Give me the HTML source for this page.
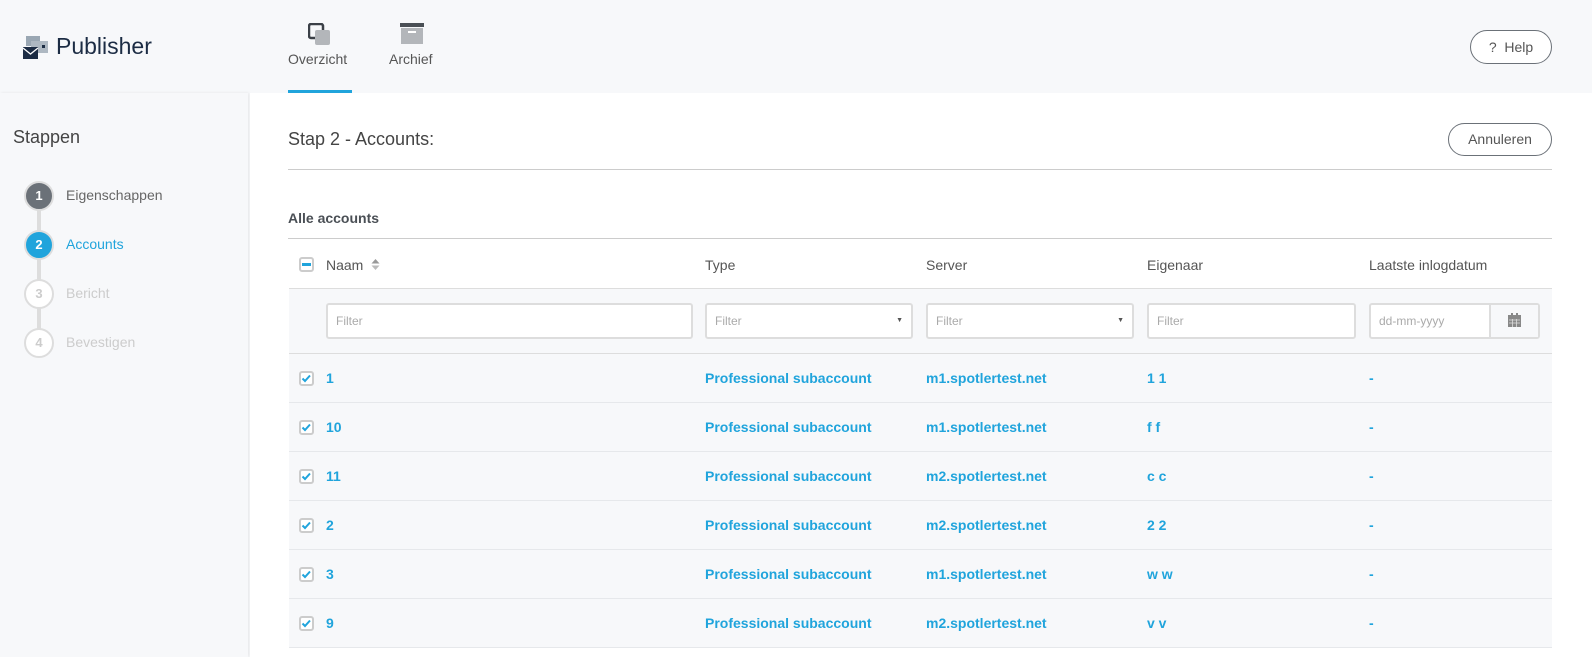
<!DOCTYPE html><html><head><style>
*{box-sizing:border-box;margin:0;padding:0}
body{width:1592px;height:657px;overflow:hidden;background:#f7f8fa;font-family:"Liberation Sans",sans-serif;position:relative;color:#4a4f55}
.a{position:absolute}
.top{left:0;top:0;width:1592px;height:93px;background:#f7f8fa}
.side{left:0;top:93px;width:248px;height:564px;background:#f7f8fa;box-shadow:1px 0 3px rgba(0,0,0,.08)}
.main{left:250px;top:93px;width:1342px;height:564px;background:#fff}
.circ{width:30px;height:30px;border-radius:50%;border:2px solid #ddd;background:#fff;color:#ccc;font-size:13px;font-weight:bold;text-align:center;line-height:26px}
.btn{border:1px solid #6b7178;border-radius:17px;background:#fff;font-size:14px;color:#555;text-align:center}
.inp{top:303px;height:36px;border:2px solid #ddd;border-radius:3px;background:#fff;font-size:12px;color:#aaa;padding:9px 8px}
.cb{width:15px;height:15px;border:2px solid #ccc;border-radius:3px;background:#fff}
.row{left:289px;width:1263px;height:49px;background:#f7f8fa;border-bottom:1px solid #e6e8eb}
.t{font-size:14px;font-weight:bold;color:#20a4dc}
.h{font-size:14px;color:#555;top:257px}
</style></head><body>
<div class="a top"></div>
<svg class="a" style="left:22px;top:36px" width="28" height="24"><rect x="4" y="0" width="14" height="10" fill="#9aa7b3"/><rect x="9" y="5" width="17" height="12" fill="#aeb8c2"/><rect x="20" y="9" width="3" height="3" fill="#1c2c44"/><rect x="1" y="11" width="15" height="12" fill="#1c2c44"/><path d="M1 12l7.5 6 7.5-6" stroke="#fff" fill="none" stroke-width="1.3"/></svg>
<div class="a" style="left:56px;top:33px;font-size:23px;color:#1c2c44">Publisher</div>
<svg class="a" style="left:308px;top:23px" width="24" height="24"><rect x="1" y="1" width="14" height="14" rx="2" fill="none" stroke="#3b4047" stroke-width="2.5"/><rect x="7" y="7" width="15" height="15" rx="2" fill="#b3b6ba"/></svg>
<div class="a" style="left:288px;top:51px;font-size:14px;color:#555">Overzicht</div>
<div class="a" style="left:288px;top:90px;width:64px;height:3px;background:#20a4dc"></div>
<svg class="a" style="left:400px;top:23px" width="24" height="22"><rect x="0" y="0" width="24" height="4" fill="#4a4f55"/><rect x="1" y="5" width="22" height="16" fill="#b3b6ba"/><rect x="8" y="8" width="8" height="2" fill="#fff"/></svg>
<div class="a" style="left:389px;top:51px;font-size:14px;color:#555">Archief</div>
<div class="a btn" style="left:1470px;top:30px;width:82px;height:34px;line-height:32px">?&nbsp; Help</div>
<div class="a side"></div>
<div class="a main"></div>
<div class="a" style="left:13px;top:127px;font-size:18px;color:#444">Stappen</div>
<div class="a" style="left:37px;top:200px;width:4px;height:145px;background:#ddd"></div>
<div class="a circ" style="left:24px;top:181px;background:#6b7178;color:#fff">1</div>
<div class="a circ" style="left:24px;top:230px;background:#20a4dc;color:#fff">2</div>
<div class="a circ" style="left:24px;top:279px">3</div>
<div class="a circ" style="left:24px;top:328px">4</div>
<div class="a" style="left:66px;top:187px;font-size:14px;color:#666">Eigenschappen</div>
<div class="a" style="left:66px;top:236px;font-size:14px;color:#20a4dc">Accounts</div>
<div class="a" style="left:66px;top:285px;font-size:14px;color:#ccc">Bericht</div>
<div class="a" style="left:66px;top:334px;font-size:14px;color:#ccc">Bevestigen</div>
<div class="a" style="left:288px;top:129px;font-size:18px;color:#444">Stap 2 - Accounts:</div>
<div class="a btn" style="left:1448px;top:123px;width:104px;height:33px;line-height:31px">Annuleren</div>
<div class="a" style="left:288px;top:169px;width:1264px;height:1px;background:#ccc"></div>
<div class="a" style="left:288px;top:210px;font-size:14px;font-weight:bold;color:#4a4f55">Alle accounts</div>
<div class="a" style="left:288px;top:238px;width:1264px;height:1px;background:#ccc"></div>
<div class="a cb" style="left:299px;top:257px"><div style="margin:4px 1px;height:3px;background:#20a4dc"></div></div>
<div class="a h" style="left:326px">Naam</div>
<svg class="a" style="left:371px;top:258px" width="9" height="13"><path d="M0.5 5.5L4.5 1l4 4.5z" fill="#999"/><path d="M0.5 7.5L4.5 12l4-4.5z" fill="#bbb"/></svg>
<div class="a h" style="left:705px">Type</div>
<div class="a h" style="left:926px">Server</div>
<div class="a h" style="left:1147px">Eigenaar</div>
<div class="a h" style="left:1369px">Laatste inlogdatum</div>
<div class="a" style="left:289px;top:288px;width:1263px;height:66px;background:#f7f8fa;border-top:1px solid #ddd;border-bottom:1px solid #ddd"></div>
<div class="a inp" style="left:326px;width:367px">Filter</div>
<div class="a inp" style="left:705px;width:208px">Filter<span style="float:right;font-size:7px;color:#555;margin-top:3px">&#x25BC;</span></div>
<div class="a inp" style="left:926px;width:208px">Filter<span style="float:right;font-size:7px;color:#555;margin-top:3px">&#x25BC;</span></div>
<div class="a inp" style="left:1147px;width:209px">Filter</div>
<div class="a inp" style="left:1369px;width:171px">dd-mm-yyyy</div>
<div class="a" style="left:1489px;top:305px;width:49px;height:32px;background:#f7f8fa;border-left:2px solid #ddd"></div>
<svg class="a" style="left:1508px;top:313px" width="13" height="14"><rect x="0" y="2" width="13" height="12" fill="#888"/><rect x="3" y="0" width="2" height="3" fill="#888"/><rect x="8" y="0" width="2" height="3" fill="#888"/><path d="M1 7h11M1 10h11M4.5 6v8M8.5 6v8" stroke="#ddd" stroke-width=".8"/></svg>
<div id="rows"></div>
<script>
var d=[["1","m1","1 1"],["10","m1","f f"],["11","m2","c c"],["2","m2","2 2"],["3","m1","w w"],["9","m2","v v"]],h="";
d.forEach(function(r,i){var y=354+i*49;h+='<div class="a row" style="top:'+y+'px"></div><div class="a cb" style="left:299px;top:'+(y+17)+'px"><svg width="11" height="11" style="display:block"><path d="M1.5 5.5l2.5 2.5 5-5.5" stroke="#20a4dc" stroke-width="2" fill="none"/></svg></div>';
[[326,r[0]],[705,"Professional subaccount"],[926,r[1]+".spotlertest.net"],[1147,r[2]],[1369,"-"]].forEach(function(c){h+='<div class="a t" style="left:'+c[0]+'px;top:'+(y+16)+'px">'+c[1]+'</div>'});});
document.getElementById("rows").innerHTML=h;
</script>
</body></html>
